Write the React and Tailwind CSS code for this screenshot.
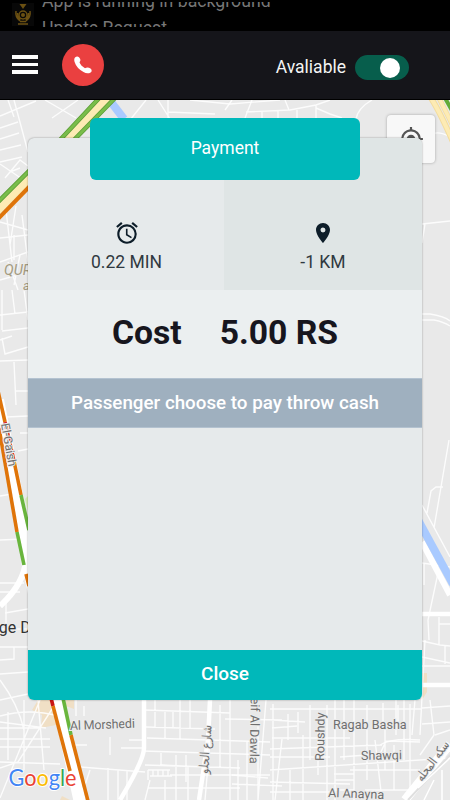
import { MdAccessAlarm, MdPlace, MdMyLocation } from 'react-icons/md'

const streets = [
  // top left
  'M0 116L36 101M0 128L18 122M0 139L19 133M0 150L21 145M0 162L22 157M14 100L28 152M8 100L14 117M0 164L28 183M5 178L20 160L28 166M10 172L20 168',
  'M45 100L76 118M52 118L78 100M130 120L146 100M158 100L170 119M168 100V119M168 112L215 114M190 100L230 104L280 100',
  'M225 110L232 100M245 118L252 100M246 112L290 110L316 105L330 100M285 100L289 110M278 110V120M262 112V120M297 110V120M316 105V119M316 108L330 114L342 118M356 119Q358 108 372 100M430 135Q438 130 450 137',
  // left side
  'M0 222L28 230M0 238L28 235M6 210L12 262M16 206L10 245M22 215L28 262M0 262L28 252M14 235V260M0 280L28 272M8 262L18 290M20 255L14 285',
  'M0 315L28 312M2 331L28 328M2 290V330M12 290L15 314M24 290L28 320M0 340L12 336M2 338L5 354L28 347M0 361L28 360M14 362L16 405M16 391H28M6 417L28 416M20 433H28M18 451L28 449M0 496L18 493M0 540L24 539',
  'M0 583H24M0 592H20M5 613L28 609M6 600V625M0 629H28M0 647H28M14 647V659L0 660M0 674L28 672',
  // right side
  'M422 224L450 221M425 224L422 243M422 314H430Q444 316 450 321M422 320H434Q444 322 450 326',
  'M449 440L434 528M443 487H436L431 491L427 513M422 505L450 557M422 563L450 567M424 563V585M438 573L428 620L429 640M422 641L440 645L450 646M439 617V645M439 624H450M445 645V664M422 657L450 663',
  // bottom left
  'M0 680Q18 704 24 730M0 700L28 694M0 716Q30 708 58 716M0 728H40M0 739H50M0 747H50M8 712V760M24 700V770M0 762L60 764M0 768L18 762L54 706M38 700L44 770M0 798L40 700M0 722L46 728',
  'M76 700V716M84 706V716M72 745H87M110 737V755M121 748H142M129 740H142M80 767L145 772M108 768V800M118 770V800M127 770V800M90 770L80 800',
  // bottom middle
  'M145 710L230 713M146 727L215 729M147 738L270 742M142 751L270 755M145 765L240 768M160 765L205 767M148 770H170M150 776H172M148 770V780M153 770V776M158 770V776M163 770V776M168 770V776M155 700V727M165 712V740M173 712V727M180 700V740M190 700V728M161 751V766M176 755V800M186 755V782M188 767V800M150 780L145 800M165 780V800M210 742L205 800M220 705V767M230 700V800M148 788H240M170 775H270',
  // bottom right
  'M225 719L282 720M270 709H422M272 720L305 722M273 704V800M272 738H350M270 749L382 745M270 757H330M270 770L450 758M270 782L350 784M270 792H330M288 714V740M298 712V733M297 726L272 728M282 739L275 800M290 770V800M303 735V800M310 705V760M318 730V775M327 705V800M335 700V800M334 774H354V780H335M334 790H354M344 700V760M354 700V800M367 705V780M375 740L382 800M383 703V730M396 700V735M380 745Q390 738 420 740M350 770H420M365 790H410M398 705V722M404 700V760M410 704V790M415 700L412 735M425 640L420 735M430 700L434 735L420 755M422 708L450 706M422 724L450 722M422 666H450M435 735L450 730',
  'M232 775L268 778M232 784L282 786M238 760V800M247 742V800M258 725V800M266 700L258 800M385 730V770M394 745V790M340 757L380 754L386 741L420 742',
]

function MapText({ x, y, rotate = 0, size = 12.6, children, fill = '#6f6f6f', ...rest }) {
  return (
    <text
      transform={`translate(${x} ${y}) rotate(${rotate})`}
      fontSize={size}
      fill={fill}
      stroke="#ececec"
      strokeWidth="2"
      paintOrder="stroke"
      {...rest}
    >
      {children}
    </text>
  )
}

function CityMap() {
  return (
    <svg viewBox="0 100 450 700" className="block h-full w-full bg-[#e9e9e9] font-[Roboto,'Noto_Sans',sans-serif]">
      <g fill="#f0dfc5">
        <path d="M38 700H57L56 725L41 728L42 715L32 710ZM66 700H74V709L66 706ZM422 673H427V692L422 700ZM62 796L70 800H60Z" />
        <path d="M25 499l3-3v15z" fill="#d4ebb8" />
      </g>
      <g fill="none" stroke="#fff" strokeWidth="1.4" strokeOpacity="0.85">
        {streets.map((d) => (
          <path key={d} d={d} />
        ))}
      </g>

      {/* wide white streets */}
      <g fill="none" stroke="#fff">
        <path d="M144 700V748Q144 760 120 800M210 700L208 740L199 800" strokeWidth="4.5" />
        <path d="M0 606Q24 584 26 560" strokeWidth="6" />
        <path d="M422 614H450M422 685H450" strokeWidth="4.5" />
        <path d="M422 542L450 595" strokeWidth="6" />
        <path d="M405 800L450 744" strokeWidth="9" />
        <path d="M408 800L450 755" stroke="#dfdfdf" strokeWidth="2" />
        <path d="M418 788L450 758M424 800L434 780M442 770V800" strokeWidth="1.5" />
      </g>

      {/* canal */}
      <g stroke="#a9caff" strokeWidth="8">
        <path d="M111 102L124 119" />
        <path d="M418 520L453 584" />
      </g>

      {/* highways at the top */}
      <g fill="none">
        <path d="M109 95L-4 210" stroke="#fdebb4" strokeWidth="11" />
        <path d="M102 95L60 140L-4 204" stroke="#5a9c35" strokeWidth="4.5" />
        <path d="M102 95L60 140L-4 204" stroke="#79bd4a" strokeWidth="3" />
        <path d="M116 97L72 142" stroke="#5a9c35" strokeWidth="4.5" />
        <path d="M116 97L72 142" stroke="#79bd4a" strokeWidth="3" />
        <path d="M30 186L-4 221" stroke="#df7409" strokeWidth="4" />
        <path d="M431 98Q440 112 453 142" stroke="#f3dc9d" strokeWidth="6" />
        <path d="M431 98Q440 112 453 142" stroke="#fdebb4" strokeWidth="4" />
        <path d="M439 98L455 130" stroke="#f3dc9d" strokeWidth="5" />
        <path d="M439 98L455 130" stroke="#fdebb4" strokeWidth="3.5" />
        <path d="M445 98L454 114" stroke="#62ab38" strokeWidth="4" />
      </g>

      {/* El-Gaish road */}
      <g fill="none" strokeWidth="3.6">
        <path d="M-2 400L24 530L28 566L82 812" stroke="#fff" strokeWidth="12" />
        <path d="M-2 391L5 422" stroke="#df7409" />
        <path d="M5 422L14 461" stroke="#d8232a" />
        <path d="M14 461L21 495" stroke="#df7409" />
        <path d="M21 495L29 530" stroke="#69b53d" />
        <path d="M-1 428L17 532" stroke="#df7409" />
        <path d="M17 532L24 565" stroke="#69b53d" />
        <path d="M26 574L29 586" stroke="#df7409" />
        <path d="M51 698L53 706" stroke="#ca1515" />
        <path d="M53 706L70 771" stroke="#df7409" />
        <path d="M63 698L71 735" stroke="#69b53d" />
        <path d="M71 735L88 801" stroke="#df7409" />
      </g>

      <MapText x={4} y={275} size={14.5} fill="#a39a80" fontStyle="italic">QURASHI</MapText>
      <MapText x={23} y={290} size={13} fill="#a39a80" fontStyle="italic">ai</MapText>
      <MapText x={1} y={424} rotate={80} size={12}>El-Gaish</MapText>
      <MapText x={-10} y={633} size={16} fill="#333">nge D</MapText>
      <MapText x={70} y={730} rotate={-2} textLength="65">Al Morshedi</MapText>
      <MapText x={251} y={690} rotate={91}>Seif Al Dawla</MapText>
      <MapText x={324} y={761} rotate={-89}>Roushdy</MapText>
      <MapText x={333} y={729}>Ragab Basha</MapText>
      <MapText x={361} y={760} rotate={-1}>Shawqi</MapText>
      <MapText x={328} y={797} rotate={2}>Al Anayna</MapText>
      <MapText x={208} y={774} rotate={-86} textLength="49" lengthAdjust="spacingAndGlyphs">شارع الحلو</MapText>
      <MapText x={422} y={782} rotate={-53} textLength="47" lengthAdjust="spacingAndGlyphs">سكه المحله</MapText>

      {/* map provider mark */}
      <text x="8.5" y="786" className="font-[Lato,sans-serif]" fontSize="23" stroke="#fff" strokeWidth="2" strokeLinejoin="round" paintOrder="stroke" textLength="68" lengthAdjust="spacingAndGlyphs">
        <tspan fill="#4285f4">G</tspan>
        <tspan fill="#ea4335">o</tspan>
        <tspan fill="#fbbc05">o</tspan>
        <tspan fill="#4285f4">g</tspan>
        <tspan fill="#34a853">l</tspan>
        <tspan fill="#ea4335">e</tspan>
      </text>
    </svg>
  )
}

function Notifications() {
  return (
    <div className="flex h-[31px] shrink-0 bg-black text-[#777]">
      <svg viewBox="0 0 22 24" className="ml-3 mt-[3px] h-6 w-[22px] shrink-0">
        <path d="M0 0h22v23H0z" fill="#080808" />
        <path d="M7.500 1h7l-3.500 5z" fill="#6b5012" />
        <g fill="none" stroke="#6b5012" strokeWidth="1.500">
          <circle cx="11" cy="12" r="4" />
          <path d="M4 8q-1 6 4 10M18 8q1 6-4 10M5.500 10q0 4 3 6.500M16.500 10q0 4-3 6.500M6 21h10M8 18.500h6" />
        </g>
        <circle cx="11" cy="12" r="2" fill="#6b5012" />
      </svg>
      <div className="ml-2 mt-[2px] h-[25px] overflow-hidden text-[17.700px] leading-[25px]">
        <div className="-mt-[13px] whitespace-nowrap">App is running in background</div>
        <div className="mt-[1.500px] whitespace-nowrap">Update Request</div>
      </div>
    </div>
  )
}

function AppBar() {
  return (
    <header className="flex h-[69px] shrink-0 items-center border-b border-black bg-[#15151a] pl-3 pr-[41px]">
      <button className="-mt-[1px] flex w-[26px] flex-col gap-[4px]">
        <span className="h-[3.500px] w-full bg-white" />
        <span className="h-[3.500px] w-full bg-white" />
        <span className="h-[3.500px] w-full bg-white" />
      </button>
      <button className="-mt-[1px] ml-6 flex size-[42px] items-center justify-center rounded-full bg-[#ea4040]">
        <svg viewBox="0 0 18 18" className="size-[18px]" fill="#fff">
          <path d="M1 1.600Q3-.3 5 1.200Q7.600 4 5.500 6.200Q6.500 9.500 11 12.200Q13.800 10.400 16.500 12.600Q18.800 14.800 16.600 16.400Q13.500 18.500 9.500 16Q2.500 12.200.6 6Q-.3 3 1 1.600z" />
        </svg>
      </button>
      <span className="ml-auto mt-[4px] text-[17.500px] text-[#f4f4f4]">Avaliable</span>
      <button className="ml-[9px] mt-[5px] flex h-[25px] w-[54px] items-center justify-end rounded-full bg-[#075e4c] pr-[9px]">
        <span className="size-[20px] rounded-full bg-white" />
      </button>
    </header>
  )
}

function PaymentDialog() {
  return (
    <section className="absolute left-7 top-[38px] flex h-[562px] w-[394px] flex-col rounded-md bg-[#e6eaeb] shadow-[0_0_2px_rgba(0,0,0,0.4)]">
      <div className="flex h-[152px] text-[17.500px] text-[#303940]">
        <div className="flex w-[196px] flex-col items-center pl-[1px] pt-[82px]">
          <MdAccessAlarm className="size-[26px] text-[#0d1d29]" />
          <span className="mt-[4px] leading-6">0.22 MIN</span>
        </div>
        <div className="flex flex-1 flex-col items-center rounded-tr-md bg-[#dfe5e5] pt-[83px]">
          <MdPlace className="size-[24px] text-[#0d1d29]" />
          <span className="mt-[5px] leading-6">-1 KM</span>
        </div>
      </div>
      <div className="flex h-[88px] items-center justify-center gap-[38px] bg-[#ebeff0] pb-[2px] text-[33.700px] font-bold text-[#17161e]">
        <span>Cost</span>
        <span>5.00 RS</span>
      </div>
      <div className="flex h-[50px] items-center justify-center border-y border-[#b3c2d0] bg-[#9fb0bf] text-[18.800px] font-medium text-white">
        Passenger choose to pay throw cash
      </div>
      <div className="flex-1" />
      <button className="h-[50px] rounded-b-md bg-[#00b8ba] pb-[2px] text-[19px] font-medium text-white">
        Close
      </button>
      <h1 className="absolute left-[62px] -top-5 flex h-[62px] w-[270px] items-center justify-center rounded-md bg-[#00b8ba] pb-[1px] text-[17.500px] text-white">
        Payment
      </h1>
    </section>
  )
}

export default function App() {
  return (
    <div className="flex h-[800px] w-[450px] flex-col overflow-hidden font-[Roboto,sans-serif]">
      <Notifications />
      <AppBar />
      <main className="relative min-h-0 flex-1">
        <CityMap />
        <button className="absolute right-[15px] top-[15px] flex size-[48px] items-center justify-center rounded-sm bg-[#f8f8f8] shadow-[0_0_3px_rgba(0,0,0,0.3)]">
          <MdMyLocation className="size-[26px] text-[#555]" />
        </button>
        <PaymentDialog />
      </main>
    </div>
  )
}
